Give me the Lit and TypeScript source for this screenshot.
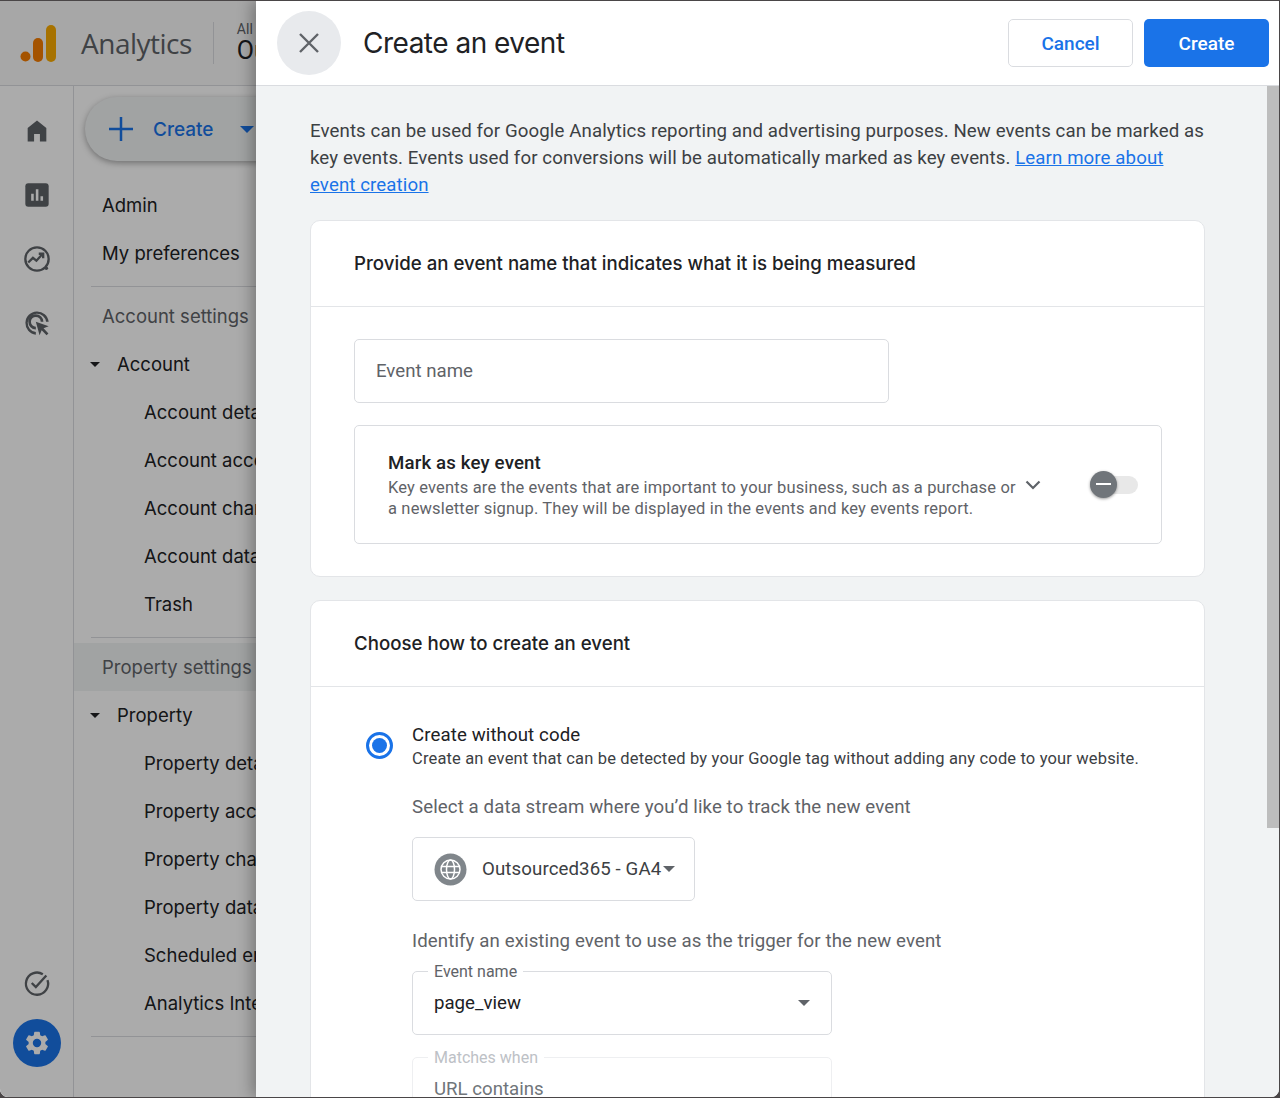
import {LitElement, html, css, svg} from 'lit';
import {customElement} from 'lit/decorators.js';

const railIcons = [
  svg`<path d="M4 21V9.5L12 3l8 6.500V21h-5.500v-6.500h-5V21z" fill="#5f6368"/>`,
  svg`<rect x="2" y="2" width="20" height="20" rx="2.500" fill="#5f6368"/><path d="M7 11h2.200v6H7zM11 7h2.200v10H11zM15 13h2.200v4H15z" fill="#fff"/>`,
  svg`<circle cx="12" cy="12" r="10" fill="none" stroke="#5f6368" stroke-width="2"/><path d="M4.500 15l4-4 3 2.500 5-5.500M13.500 7.500h3.800v3.800" fill="none" stroke="#5f6368" stroke-width="2"/><circle cx="20" cy="20" r="1.500" fill="#5f6368"/>`,
  svg`<path d="M11 22a10 10 0 1 1 11-11h-2.200A7.900 7.900 0 1 0 11 19.800zM11 17.500A6.500 6.500 0 1 1 17.500 11h-2.300A4.200 4.200 0 1 0 11 15.200z" fill="#5f6368"/><path d="M11 11l11 3.800-4.400 1.800 4.200 4.300-1.600 1.600-4.200-4.300-1.800 4.400z" fill="#5f6368"/>`,
];

const accountItems = ['Account details', 'Account access management', 'Account change history', 'Account data deletion requests', 'Trash'];
const propertyItems = ['Property details', 'Property access management', 'Property change history', 'Property data deletion requests', 'Scheduled emails', 'Analytics Intelligence history'];

@customElement('app-root')
class AppRoot extends LitElement {
  static styles = css`
    :host {
      display: block;
      position: relative;
      width: 1280px;
      height: 1098px;
      overflow: hidden;
      background: #4a4647;
      font-family: Roboto, "Liberation Sans", sans-serif;
      color: #3c4043;
    }
    .window {
      position: absolute;
      inset: 1px 1px 1px 0;
      border-radius: 0 0 8px 8px;
      overflow: hidden;
      background: #fff;
    }
    .topbar {
      height: 84px;
      display: flex;
      align-items: center;
      border-bottom: 1px solid #dadce0;
      background: #fafafa;
      box-sizing: content-box;
    }
    .logo {
      width: 36px;
      height: 40px;
      margin-left: 20px;
    }
    .brand {
      margin-left: 25px;
      font-family: "Open Sans", Roboto, sans-serif;
      font-size: 28px;
      letter-spacing: -0.5px;
      color: #5f6368;
    }
    .sep {
      width: 1px;
      height: 42px;
      margin-left: 21px;
      background: #dadce0;
    }
    .account {
      margin-left: 23px;
      white-space: nowrap;
      font-size: 14px;
      color: #5f6368;
    }
    .account b {
      display: block;
      font-weight: 400;
      font-size: 25px;
      color: #202124;
      margin-top: -1px;
    }
    .main {
      display: flex;
      height: 1012px;
    }
    .rail {
      width: 74px;
      flex: none;
      display: flex;
      flex-direction: column;
      align-items: center;
      gap: 36px;
      padding: 31px 0 31px;
      box-sizing: border-box;
      border-right: 1px solid #dadce0;
      background: #fff;
    }
    .rail svg {
      width: 28px;
      height: 28px;
      display: block;
    }
    .rail .bottom {
      margin-top: auto;
      display: flex;
      flex-direction: column;
      align-items: center;
      gap: 22px;
    }
    .gear {
      width: 48px;
      height: 48px;
      border-radius: 50%;
      background: #1a73e8;
      display: flex;
      align-items: center;
      justify-content: center;
    }
    .nav {
      flex: 1;
      padding-top: 11px;
      font-family: Inter, Roboto, sans-serif;
      font-size: 18.500px;
      color: #202124;
      white-space: nowrap;
      overflow: hidden;
    }
    .create {
      margin-left: 11px;
      width: 230px;
      height: 64px;
      border-radius: 32px;
      background: #f1f3f4;
      box-shadow: 0 2px 6px rgba(0, 0, 0, 0.35);
      display: flex;
      align-items: center;
      color: #1a73e8;
      font-size: 19px;
      font-weight: 500;
    }
    .create svg {
      margin-left: 24px;
      margin-right: 20px;
    }
    .caret {
      width: 0;
      height: 0;
      margin-left: 26px;
      border: 7px solid transparent;
      border-top-color: #1a73e8;
      border-bottom: 0;
    }
    .item {
      height: 48px;
      display: flex;
      align-items: center;
      padding-left: 28px;
    }
    .top-items {
      margin-top: 20px;
    }
    .item.sub {
      padding-left: 70px;
    }
    .item.group {
      padding-left: 16px;
      gap: 17px;
    }
    .item.group i {
      width: 0;
      height: 0;
      border: 5px solid transparent;
      border-top-color: #202124;
      border-bottom: 0;
    }
    .item.heading {
      color: #5f6368;
    }
    .item.hl {
      background: #f1f3f4;
    }
    .divider {
      height: 1px;
      margin: 9px 0 5px 17px;
      background: #dadce0;
    }
    .scrim {
      position: absolute;
      inset: 0;
      background: rgba(0, 0, 0, 0.33);
    }
    .drawer {
      position: absolute;
      left: 256px;
      right: 0;
      top: 0;
      bottom: 0;
      display: flex;
      flex-direction: column;
      background: #f1f3f4;
      box-shadow: -4px 0 14px rgba(0, 0, 0, 0.3);
    }
    .head {
      height: 84px;
      flex: none;
      display: flex;
      align-items: center;
      padding: 0 10px 0 21px;
      background: #fff;
      border-bottom: 1px solid #dadce0;
    }
    .close {
      width: 64px;
      height: 64px;
      border-radius: 50%;
      background: #e8eaed;
      display: flex;
      align-items: center;
      justify-content: center;
    }
    .title {
      flex: 1;
      margin-left: 22px;
      font-family: Inter, Roboto, sans-serif;
      font-size: 28px;
      letter-spacing: -0.5px;
      color: #202124;
    }
    .btn {
      height: 48px;
      box-sizing: border-box;
      border-radius: 5px;
      display: flex;
      align-items: center;
      justify-content: center;
      font-size: 19px;
      font-weight: 500;
    }
    .btn.cancel {
      width: 125px;
      border: 1px solid #dadce0;
      background: #fff;
      color: #1a73e8;
    }
    .btn.ok {
      width: 125px;
      margin-left: 11px;
      background: #1a73e8;
      color: #fff;
    }
    .scroller {
      flex: 1;
      min-height: 0;
      display: flex;
    }
    .content {
      flex: 1;
      min-width: 0;
      overflow: hidden;
      padding: 32px 62px 0 54px;
    }
    .intro {
      margin: 0 0 21px;
      font-size: 18.670px;
      line-height: 27px;
      letter-spacing: 0.1px;
    }
    .intro a {
      color: #1a73e8;
      text-decoration: underline;
    }
    .card {
      background: #fff;
      border: 1px solid #e3e5e8;
      border-radius: 10px;
      margin-bottom: 23px;
    }
    .card-head {
      height: 85px;
      display: flex;
      align-items: center;
      padding-left: 43px;
      border-bottom: 1px solid #e3e5e8;
      font-family: Inter, Roboto, sans-serif;
      font-size: 18.670px;
      font-weight: 500;
      color: #202124;
    }
    .card-body {
      padding: 32px 42px 32px 43px;
    }
    .input {
      width: 535px;
      height: 64px;
      box-sizing: border-box;
      border: 1px solid #dadce0;
      border-radius: 5px;
      display: flex;
      align-items: center;
      padding-left: 21px;
      font-size: 18.670px;
      color: #5f6368;
    }
    .key {
      margin-top: 22px;
      height: 119px;
      box-sizing: border-box;
      border: 1px solid #dadce0;
      border-radius: 5px;
      display: flex;
      align-items: center;
      padding-left: 33px;
    }
    .key-text {
      width: 630px;
      flex: none;
      font-size: 16.500px;
      line-height: 21px;
      letter-spacing: 0.15px;
      color: #5f6368;
    }
    .key-text b {
      display: block;
      margin-bottom: 2px;
      font-weight: 500;
      font-size: 18.670px;
      line-height: 24px;
      color: #202124;
    }
    .chev {
      margin-left: 7px;
      margin-right: 49px;
    }
    .switch {
      position: relative;
      width: 48px;
      height: 18px;
      border-radius: 9px;
      background: #e8e8e8;
    }
    .knob {
      position: absolute;
      left: 0;
      top: -5px;
      width: 27px;
      height: 27px;
      border-radius: 50%;
      background: #70757a;
      box-shadow: 0 1px 3px rgba(0, 0, 0, 0.4);
      display: flex;
      align-items: center;
      justify-content: center;
    }
    .knob span {
      width: 15px;
      height: 2px;
      background: #fff;
    }
    .method {
      display: flex;
      padding: 36px 0 0 55px;
    }
    .radio {
      width: 27px;
      height: 27px;
      flex: none;
      box-sizing: border-box;
      margin-top: 9px;
      margin-right: 19px;
      border: 3px solid #1a73e8;
      border-radius: 50%;
      display: flex;
      align-items: center;
      justify-content: center;
    }
    .radio span {
      width: 15px;
      height: 15px;
      border-radius: 50%;
      background: #1a73e8;
    }
    .method-body {
      flex: 1;
      min-width: 0;
    }
    .method-title {
      font-size: 18.670px;
      line-height: 24px;
      letter-spacing: 0.1px;
      color: #202124;
    }
    .method-desc {
      font-size: 16.500px;
      line-height: 24px;
      letter-spacing: 0.15px;
      color: #3c4043;
    }
    .prompt {
      margin-top: 24px;
      font-size: 18.670px;
      line-height: 24px;
      letter-spacing: 0.1px;
      color: #5f6368;
    }
    .stream {
      margin-top: 18px;
      width: 283px;
      height: 64px;
      box-sizing: border-box;
      border: 1px solid #dadce0;
      border-radius: 5px;
      display: flex;
      align-items: center;
      padding-left: 21px;
      font-size: 18.670px;
      letter-spacing: 0.1px;
    }
    .stream svg {
      flex: none;
      margin-right: 15px;
    }
    .stream .val {
      width: 181px;
      flex: none;
      overflow: hidden;
      white-space: nowrap;
    }
    .tri {
      width: 0;
      height: 0;
      flex: none;
      border: 6px solid transparent;
      border-top-color: #5f6368;
      border-bottom: 0;
    }
    .prompt.second {
      margin-top: 28px;
    }
    .field {
      position: relative;
      margin-top: 18px;
      width: 420px;
      height: 64px;
      box-sizing: border-box;
      border: 1px solid #dadce0;
      border-radius: 5px;
      display: flex;
      align-items: center;
      justify-content: space-between;
      padding: 0 21px;
      font-size: 18.670px;
      color: #202124;
    }
    .field label {
      position: absolute;
      left: 15px;
      top: -10px;
      padding: 0 6px;
      background: #fff;
      font-size: 16px;
      line-height: 20px;
      color: #5f6368;
    }
    .field.off {
      margin-top: 22px;
      border-color: #eeeff1;
      color: #70757a;
    }
    .field.off label {
      color: #bdc1c6;
    }
    .bar {
      width: 12px;
      flex: none;
      background: #f1f3f4;
    }
    .thumb {
      height: 742px;
      background: #bdbdbd;
    }
  `;

  render() {
    return html`
      <div class="window">
        <div class="topbar">
          <svg class="logo" viewBox="0 0 36 40">
            <circle cx="5.500" cy="33.500" r="5" fill="#f57c00"/>
            <rect x="13" y="15" width="10" height="24" rx="5" fill="#f57c00"/>
            <rect x="26" y="2" width="10" height="37" rx="5" fill="#f9ab00"/>
          </svg>
          <div class="brand">Analytics</div>
          <div class="sep"></div>
          <div class="account">All accounts<b>Outsourced365</b></div>
        </div>
        <div class="main">
          <div class="rail">
            ${railIcons.map((i) => html`<svg viewBox="0 0 24 24">${i}</svg>`)}
            <div class="bottom">
              <svg viewBox="0 0 24 24">
                <path d="M21 9.500A9.500 9.500 0 1 1 17 4.500" fill="none" stroke="#5f6368" stroke-width="2"/>
                <path d="M7.500 12l3.500 3.500 9-10" fill="none" stroke="#5f6368" stroke-width="2"/>
              </svg>
              <div class="gear">
                <svg viewBox="0 0 24 24">
                  <path fill="#fff" d="M19.140 12.940c.04-.3.060-.61.060-.94 0-.32-.02-.64-.07-.94l2.030-1.580a.49.49 0 0 0 .12-.61l-1.920-3.320a.49.49 0 0 0-.59-.22l-2.390.96c-.5-.38-1.030-.7-1.620-.94l-.36-2.540a.48.48 0 0 0-.48-.41h-3.840a.47.47 0 0 0-.47.41l-.36 2.540c-.59.24-1.130.57-1.620.94l-2.390-.96a.48.48 0 0 0-.59.22L2.740 8.870a.47.47 0 0 0 .12.61l2.030 1.580c-.05.3-.09.63-.09.94s.02.640.07.940l-2.030 1.580a.49.49 0 0 0-.12.61l1.920 3.320c.12.22.37.29.59.22l2.390-.96c.5.380 1.030.7 1.620.94l.36 2.540c.05.240.24.410.48.410h3.840c.24 0 .44-.17.47-.41l.36-2.540c.59-.24 1.130-.56 1.620-.94l2.390.96c.22.080.47 0 .59-.22l1.920-3.320a.47.47 0 0 0-.12-.61zM12 15.600A3.600 3.600 0 1 1 12 8.400a3.600 3.600 0 0 1 0 7.200z"/>
                </svg>
              </div>
            </div>
          </div>
          <div class="nav">
            <div class="create">
              <svg width="24" height="24" viewBox="0 0 24 24"><path d="M12 0v24M0 12h24" stroke="#1a73e8" stroke-width="2.500" fill="none"/></svg>
              Create<span class="caret"></span>
            </div>
            <div class="top-items">
              <div class="item">Admin</div>
              <div class="item">My preferences</div>
            </div>
            <div class="divider"></div>
            <div class="item heading">Account settings</div>
            <div class="item group"><i></i>Account</div>
            ${accountItems.map((t) => html`<div class="item sub">${t}</div>`)}
            <div class="divider"></div>
            <div class="item heading hl">Property settings</div>
            <div class="item group"><i></i>Property</div>
            ${propertyItems.map((t) => html`<div class="item sub">${t}</div>`)}
            <div class="divider"></div>
          </div>
        </div>
        <div class="scrim"></div>
        <div class="drawer">
          <div class="head">
            <div class="close">
              <svg width="22" height="22" viewBox="0 0 22 22"><path d="M2 2l18 18M20 2L2 20" stroke="#5f6368" stroke-width="2.400" fill="none"/></svg>
            </div>
            <div class="title">Create an event</div>
            <div class="btn cancel">Cancel</div>
            <div class="btn ok">Create</div>
          </div>
          <div class="scroller">
            <div class="content">
              <p class="intro">Events can be used for Google Analytics reporting and advertising purposes. New events can be marked as key events. Events used for conversions will be automatically marked as key events. <a>Learn more about event creation</a></p>
              <div class="card">
                <div class="card-head">Provide an event name that indicates what it is being measured</div>
                <div class="card-body">
                  <div class="input">Event name</div>
                  <div class="key">
                    <div class="key-text">
                      <b>Mark as key event</b>
                      Key events are the events that are important to your business, such as a purchase or a newsletter signup. They will be displayed in the events and key events report.
                    </div>
                    <svg class="chev" width="16" height="10" viewBox="0 0 16 10"><path d="M1.500 1.500L8 8l6.500-6.500" stroke="#5f6368" stroke-width="2.200" fill="none"/></svg>
                    <div class="switch"><div class="knob"><span></span></div></div>
                  </div>
                </div>
              </div>
              <div class="card">
                <div class="card-head">Choose how to create an event</div>
                <div class="method">
                  <div class="radio"><span></span></div>
                  <div class="method-body">
                    <div class="method-title">Create without code</div>
                    <div class="method-desc">Create an event that can be detected by your Google tag without adding any code to your website.</div>
                    <div class="prompt">Select a data stream where you’d like to track the new event</div>
                    <div class="stream">
                      <svg width="33" height="33" viewBox="0 0 33 33">
                        <circle cx="16.500" cy="16.500" r="16" fill="#80868b"/>
                        <g fill="none" stroke="#fff" stroke-width="1.500">
                          <circle cx="16.500" cy="16.500" r="9.500"/>
                          <ellipse cx="16.500" cy="16.500" rx="4" ry="9.500"/>
                          <path d="M7.500 13.500h18M7.500 19.500h18"/>
                        </g>
                      </svg>
                      <span class="val">Outsourced365 - GA4</span><span class="tri"></span>
                    </div>
                    <div class="prompt second">Identify an existing event to use as the trigger for the new event</div>
                    <div class="field"><label>Event name</label>page_view<span class="tri"></span></div>
                    <div class="field off"><label>Matches when</label>URL contains</div>
                  </div>
                </div>
              </div>
            </div>
            <div class="bar"><div class="thumb"></div></div>
          </div>
        </div>
      </div>
    `;
  }
}
